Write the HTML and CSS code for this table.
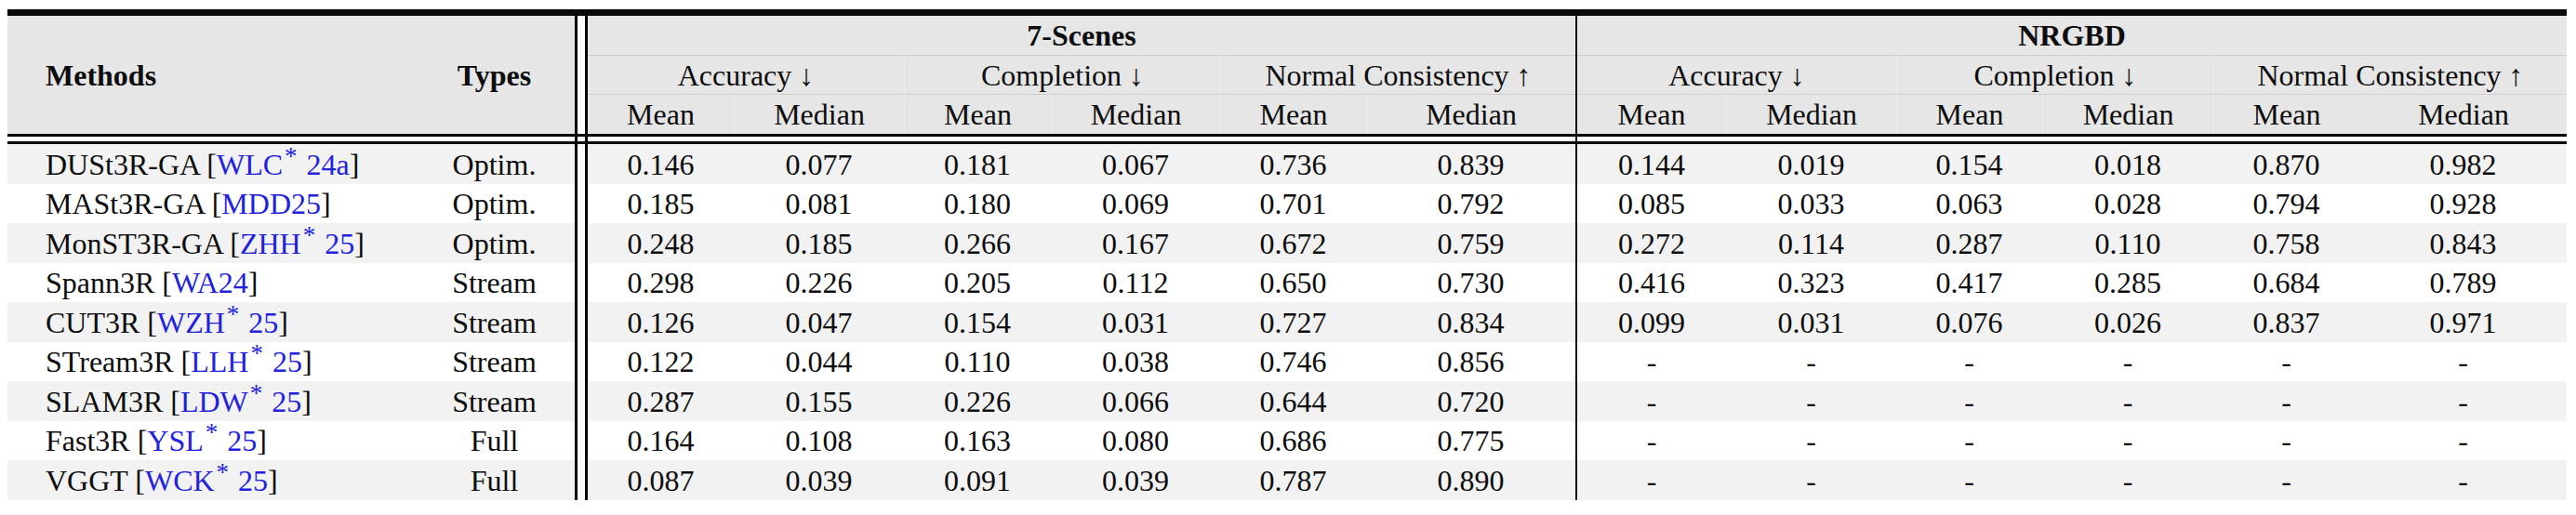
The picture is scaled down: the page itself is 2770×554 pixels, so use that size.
FILE: index.html
```html
<!DOCTYPE html>
<html>
<head>
<meta charset="utf-8">
<link rel="stylesheet" href="styles.css">
</head>
<body>
<div class="page">
<table class="results">
  <colgroup>
    <col class="c-method"><col class="c-type"><col class="c-dbl">
    <col class="c-157"><col class="c-183"><col class="c-158"><col class="c-182"><col class="c-157"><col class="c-225">
    <col class="c-vl">
    <col class="c-160"><col class="c-183"><col class="c-157"><col class="c-184"><col class="c-157"><col class="c-223">
  </colgroup>
  <tbody>
    <tr class="rule thick"><td colspan="16"></td></tr>
    <tr class="head h1">
      <td rowspan="3" class="hd method">Methods</td>
      <td rowspan="3" class="hd type">Types</td>
      <td rowspan="3" class="dbl"></td>
      <td colspan="6" class="hd ds">7-Scenes</td>
      <td rowspan="3" class="vl"></td>
      <td colspan="6" class="hd ds">NRGBD</td>
    </tr>
    <tr class="head h2">
      <td colspan="2" class="grp">Accuracy <span class="arr">↓</span></td>
      <td colspan="2" class="grp sep">Completion <span class="arr">↓</span></td>
      <td colspan="2" class="grp sep">Normal Consistency <span class="arr">↑</span></td>
      <td colspan="2" class="grp">Accuracy <span class="arr">↓</span></td>
      <td colspan="2" class="grp sep">Completion <span class="arr">↓</span></td>
      <td colspan="2" class="grp sep">Normal Consistency <span class="arr">↑</span></td>
    </tr>
    <tr class="head h3">
      <td>Mean</td><td class="sep">Median</td><td class="sep">Mean</td><td class="sep">Median</td><td class="sep">Mean</td><td class="sep">Median</td>
      <td>Mean</td><td class="sep">Median</td><td class="sep">Mean</td><td class="sep">Median</td><td class="sep">Mean</td><td class="sep">Median</td>
    </tr>
    <tr class="rule mid"><td colspan="16"></td></tr>
    <tr class="gap"><td colspan="2"></td><td class="dbl"></td><td colspan="6"></td><td class="vl"></td><td colspan="6"></td></tr>
    <tr class="rule thin"><td colspan="16"></td></tr>

    <tr class="row odd"><td class="method">DUSt3R-GA [<span class="cite">WLC<sup>*</sup>24a</span>]</td><td class="type">Optim.</td><td class="dbl"></td><td>0.146</td><td>0.077</td><td>0.181</td><td>0.067</td><td>0.736</td><td>0.839</td><td class="vl"></td><td>0.144</td><td>0.019</td><td>0.154</td><td>0.018</td><td>0.870</td><td>0.982</td></tr>
    <tr class="row"><td class="method">MASt3R-GA [<span class="cite">MDD25</span>]</td><td class="type">Optim.</td><td class="dbl"></td><td>0.185</td><td>0.081</td><td>0.180</td><td>0.069</td><td>0.701</td><td>0.792</td><td class="vl"></td><td>0.085</td><td>0.033</td><td>0.063</td><td>0.028</td><td>0.794</td><td>0.928</td></tr>
    <tr class="row odd"><td class="method">MonST3R-GA [<span class="cite">ZHH<sup>*</sup>25</span>]</td><td class="type">Optim.</td><td class="dbl"></td><td>0.248</td><td>0.185</td><td>0.266</td><td>0.167</td><td>0.672</td><td>0.759</td><td class="vl"></td><td>0.272</td><td>0.114</td><td>0.287</td><td>0.110</td><td>0.758</td><td>0.843</td></tr>
    <tr class="row"><td class="method">Spann3R [<span class="cite">WA24</span>]</td><td class="type">Stream</td><td class="dbl"></td><td>0.298</td><td>0.226</td><td>0.205</td><td>0.112</td><td>0.650</td><td>0.730</td><td class="vl"></td><td>0.416</td><td>0.323</td><td>0.417</td><td>0.285</td><td>0.684</td><td>0.789</td></tr>
    <tr class="row odd"><td class="method">CUT3R [<span class="cite">WZH<sup>*</sup>25</span>]</td><td class="type">Stream</td><td class="dbl"></td><td>0.126</td><td>0.047</td><td>0.154</td><td>0.031</td><td>0.727</td><td>0.834</td><td class="vl"></td><td>0.099</td><td>0.031</td><td>0.076</td><td>0.026</td><td>0.837</td><td>0.971</td></tr>
    <tr class="row"><td class="method">STream3R [<span class="cite">LLH<sup>*</sup>25</span>]</td><td class="type">Stream</td><td class="dbl"></td><td>0.122</td><td>0.044</td><td>0.110</td><td>0.038</td><td>0.746</td><td>0.856</td><td class="vl"></td><td>-</td><td>-</td><td>-</td><td>-</td><td>-</td><td>-</td></tr>
    <tr class="row odd"><td class="method">SLAM3R [<span class="cite">LDW<sup>*</sup>25</span>]</td><td class="type">Stream</td><td class="dbl"></td><td>0.287</td><td>0.155</td><td>0.226</td><td>0.066</td><td>0.644</td><td>0.720</td><td class="vl"></td><td>-</td><td>-</td><td>-</td><td>-</td><td>-</td><td>-</td></tr>
    <tr class="row"><td class="method">Fast3R [<span class="cite">YSL<sup>*</sup>25</span>]</td><td class="type">Full</td><td class="dbl"></td><td>0.164</td><td>0.108</td><td>0.163</td><td>0.080</td><td>0.686</td><td>0.775</td><td class="vl"></td><td>-</td><td>-</td><td>-</td><td>-</td><td>-</td><td>-</td></tr>
    <tr class="row odd"><td class="method">VGGT [<span class="cite">WCK<sup>*</sup>25</span>]</td><td class="type">Full</td><td class="dbl"></td><td>0.087</td><td>0.039</td><td>0.091</td><td>0.039</td><td>0.787</td><td>0.890</td><td class="vl"></td><td>-</td><td>-</td><td>-</td><td>-</td><td>-</td><td>-</td></tr>
  </tbody>
</table>
</div>
</body>
</html>
```

FILE: styles.css
```css
* { box-sizing: border-box; }
html, body { margin: 0; padding: 0; background: #fff; }
.page { padding: 10px 0 0 8px; }

.results {
  border-collapse: separate;
  border-spacing: 0;
  table-layout: fixed;
  width: 2752px;
  font-family: "Liberation Serif", "Times New Roman", serif;
  font-size: 32px;
  line-height: 1;
  color: #0d0d0d;
}

.c-method { width: 433px; }
.c-type { width: 177px; }
.c-dbl { width: 14px; }
.c-vl { width: 2px; }
.c-157 { width: 157px; }
.c-158 { width: 158px; }
.c-160 { width: 160px; }
.c-182 { width: 182px; }
.c-183 { width: 183px; }
.c-184 { width: 184px; }
.c-223 { width: 223px; }
.c-225 { width: 225px; }

.results td {
  padding: 0;
  text-align: center;
  vertical-align: middle;
  white-space: nowrap;
}

/* rules */
.rule td { background: #0a0a0a; font-size: 0; line-height: 0; }
.rule.thick td { height: 7px; }
.rule.mid td { height: 3px; }
.rule.thin td { height: 3px; }
.gap td { height: 5px; font-size: 0; line-height: 0; background: #fff; }

/* separators */
.results td.dbl {
  background: #fff;
  border-left: 3px solid #000;
  border-right: 3px solid #000;
}
.results td.vl { background: #111; }

/* header */
.head td { background: #e6e6e6; }
.head td.dbl { background: #fff; }
.head td.vl { background: #111; }
.h1 td { height: 42px; }
.h2 td { height: 42px; border-top: 1px solid #cdcdcd; }
.h3 td { height: 43px; border-top: 1px solid #cdcdcd; }
.head td.sep { border-left: 1px solid #ededed; }
.hd { font-weight: bold; }
.results td.method { text-align: left; padding-left: 41px; }
.results td.type { text-align: center; padding-left: 4px; }

.arr { font-family: "Liberation Serif", "DejaVu Serif", serif; font-size: 32px; }

/* body rows */
.row td { height: 42.5px; background: #fff; padding-top: 1px; }
.row.odd td { background: #f2f2f2; }
.row td.dbl { background: #fff; }
.row td.vl { background: #111; }

.cite { color: #2222dd; }
.cite sup {
  font-size: 27px;
  vertical-align: 0;
  position: relative;
  top: -11px;
  margin-right: 10px;
  margin-left: 2px;
}
```
